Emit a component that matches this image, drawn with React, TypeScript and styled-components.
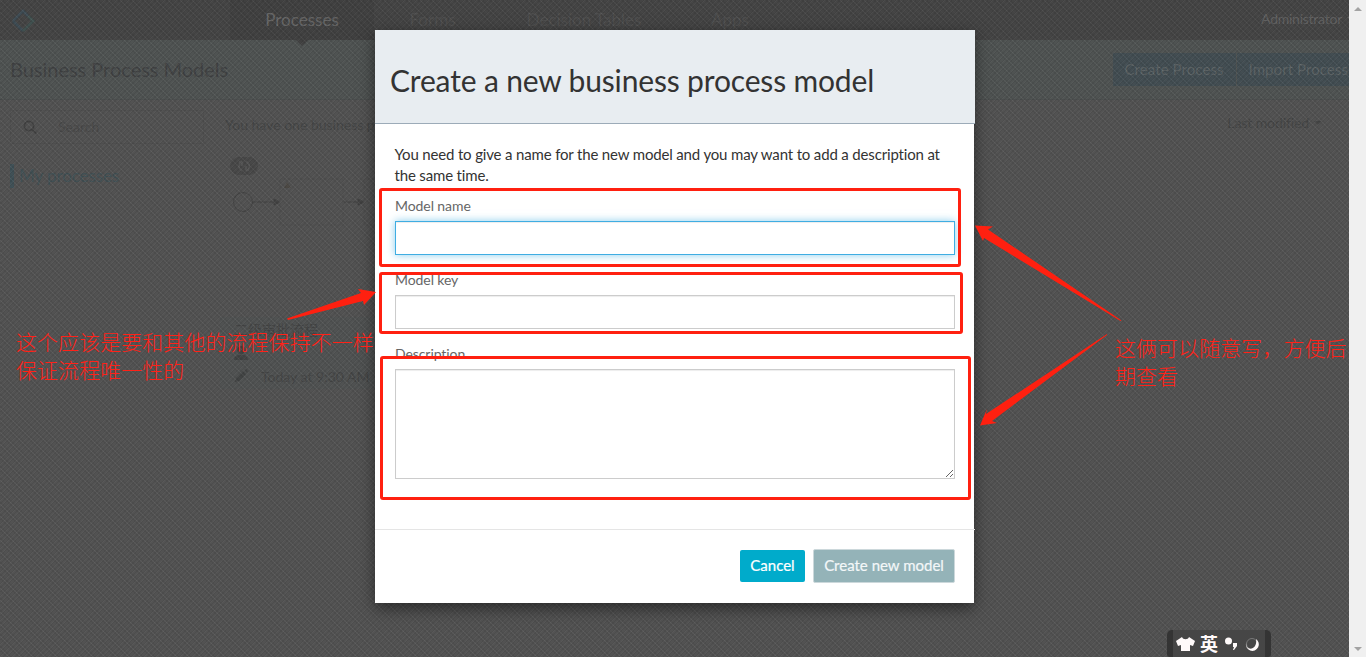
import React from "react";
import styled, { createGlobalStyle } from "styled-components";

const GlobalStyle = createGlobalStyle`
  *, *::before, *::after { box-sizing: border-box; }
  body { margin: 0; overflow: hidden; background: #505050; font-family: Lato, "Noto Sans CJK SC", sans-serif; }
`;

const Screen = styled.div`
  position: relative;
  display: flex;
  width: 1366px;
  height: 657px;
  overflow: hidden;
`;

const Page = styled.div`
  position: relative;
  flex: none;
  width: 1349px;
  overflow: hidden;
  background: #525252;
  color: #444545;
`;

const Texture = styled.div`
  position: absolute;
  inset: 0;
  background:
    linear-gradient(45deg, transparent 40%, rgba(255, 255, 255, 0.04) 50%, transparent 60%) 0 0 / 6px 6px,
    linear-gradient(-45deg, transparent 40%, rgba(255, 255, 255, 0.035) 50%, transparent 60%) 3px 0 / 6px 6px,
    linear-gradient(-45deg, transparent 40%, rgba(0, 0, 0, 0.08) 50%, transparent 60%) 0 0 / 4px 4px,
    linear-gradient(45deg, transparent 40%, rgba(0, 0, 0, 0.07) 50%, transparent 60%) 2px 0 / 4px 4px;
`;

const NavBar = styled.nav`
  display: flex;
  height: 40px;
  background: #444;
  color: #4f4f4f;
  font-size: 17px;
  line-height: 40px;
`;

const Brand = styled.div`
  width: 230px;
  padding: 8px 0 0 10px;
  svg { display: block; }
`;

const NavItem = styled.div<{ $width: number; $active?: boolean }>`
  position: relative;
  width: ${(p) => p.$width}px;
  text-align: center;
  white-space: nowrap;
  background: ${(p) => (p.$active ? "#404040" : "transparent")};
  color: ${(p) => (p.$active ? "#666" : "#4f4f4f")};
  &::after {
    content: "";
    display: ${(p) => (p.$active ? "block" : "none")};
    position: absolute;
    top: 40px;
    left: calc(50% - 6px);
    border: 6px solid transparent;
    border-top-color: #404040;
    border-bottom: 0;
  }
`;

const Account = styled.div`
  display: flex;
  align-items: center;
  gap: 5px;
  height: 38px;
  margin-left: auto;
  margin-right: -6px;
  font-size: 14px;
  letter-spacing: -0.25px;
  color: #606060;
`;

const Caret = styled.span`
  border: 4px solid transparent;
  border-top-color: currentColor;
  border-bottom: 0;
`;

const SubHeader = styled.header`
  display: flex;
  align-items: center;
  justify-content: space-between;
  height: 60px;
  padding-left: 10px;
  border-bottom: 1px solid #4a4d4d;
  background: #4f5352;
`;

const PageTitle = styled.h2`
  margin: 0;
  padding-bottom: 2px;
  font-size: 20px;
  font-weight: 400;
  letter-spacing: -0.02px;
  color: #3f4142;
`;

const Actions = styled.div`
  display: flex;
  gap: 1px;
  margin-right: -11px;
`;

const ActionButton = styled.div`
  height: 33px;
  padding: 0 12px;
  background: #424d52;
  color: #5b6264;
  font-size: 15px;
  letter-spacing: 0.07px;
  line-height: 33px;
  white-space: nowrap;
`;

const Content = styled.div`
  display: flex;
`;

const Sidebar = styled.aside`
  width: 215px;
  padding: 10px 0 0 10px;
`;

const SearchBox = styled.div`
  display: flex;
  align-items: center;
  width: 194px;
  height: 34px;
  border: 1px solid #4e4e4e;
  font-size: 14px;
  line-height: 16px;
  svg { margin: 0 15px 0 12px; }
  span { padding: 0 0 1px 6px; color: #484848; }
`;

const Filter = styled.div`
  margin-top: 20px;
  padding-left: 5px;
  border-left: 4px solid #3f5056;
  font-size: 17px;
  letter-spacing: -0.1px;
  line-height: 24px;
  color: #405055;
`;

const Models = styled.section`
  flex: 1;
  padding: 14px 27px 0 10px;
`;

const Summary = styled.div`
  display: flex;
  justify-content: space-between;
  height: 20px;
  font-size: 14px;
  line-height: 18px;
`;

const ModelCount = styled.div`
  padding-top: 2px;
`;

const SortBy = styled.div`
  display: flex;
  align-items: center;
  gap: 5px;
  height: 18px;
  letter-spacing: -0.1px;
`;

const ModelCard = styled.div`
  width: 210px;
  height: 250px;
  margin-top: 22px;
  padding-left: 5px;
  svg { display: block; }
`;

const ModelInfo = styled.div`
  display: grid;
  gap: 7px;
  margin: 44px -10px 0;
  padding: 4px 14px;
  background: #505252;
  font-size: 14px;
  line-height: 17px;
`;

const InfoRow = styled.div`
  display: flex;
  gap: 13px;
`;

const Scrollbar = styled.div`
  display: flex;
  flex-direction: column;
  align-items: center;
  justify-content: space-between;
  width: 17px;
  padding: 7px 0 6px;
  background: #f0f0f0;
`;

const ScrollArrow = styled.i<{ $up?: boolean }>`
  border: 4px solid transparent;
  ${(p) => (p.$up ? "border-bottom-color: #a3a3a3; border-top: 0;" : "border-top-color: #a3a3a3; border-bottom: 0;")}
`;

const Dialog = styled.div`
  position: absolute;
  top: 30px;
  left: 375px;
  display: flex;
  flex-direction: column;
  width: 599px;
  height: 573px;
  background: #fff;
  box-shadow: 0 5px 15px rgba(0, 0, 0, 0.5);
`;

const DialogHeader = styled.div`
  height: 94px;
  margin-right: -1px;
  padding: 30px 15px 0;
  border-bottom: 1px solid #9cabb8;
  background: #e8edf1;
`;

const DialogTitle = styled.h1`
  margin: 0;
  font-size: 30px;
  font-weight: 400;
  line-height: 40px;
  letter-spacing: -0.16px;
  color: #333;
`;

const DialogBody = styled.div`
  flex: 1;
  padding: 20px 19px 0 20px;
`;

const Intro = styled.p`
  margin: 0 -10px 10px -0.5px;
  font-size: 15px;
  line-height: 21px;
  letter-spacing: -0.16px;
  color: #333;
`;

const Field = styled.label`
  display: block;
  margin-bottom: 15px;
  font-size: 14px;
  line-height: 20px;
  letter-spacing: -0.08px;
  color: #666;
`;

const Input = styled.input<{ $focused?: boolean }>`
  display: block;
  width: 560px;
  height: 34px;
  margin-top: 5px;
  border: 1px solid ${(p) => (p.$focused ? "#3fade2" : "#ccc")};
  outline: none;
  box-shadow: inset 0 1px 1px rgba(0, 0, 0, 0.075)${(p) => (p.$focused ? ", 0 0 8px rgba(63, 173, 226, 0.6)" : "")};
`;

const TextArea = styled.textarea`
  display: block;
  width: 560px;
  height: 110px;
  margin-top: 5px;
  border: 1px solid #ccc;
  outline: none;
  box-shadow: inset 0 1px 1px rgba(0, 0, 0, 0.075);
`;

const DialogFooter = styled.div`
  display: flex;
  align-items: flex-start;
  justify-content: flex-end;
  gap: 8px;
  height: 74px;
  margin-right: -1px;
  padding: 19px 20px 0;
  border-top: 1px solid #e5e5e5;
`;

const Button = styled.button<{ $muted?: boolean }>`
  width: ${(p) => (p.$muted ? 142 : 65)}px;
  height: ${(p) => (p.$muted ? 34 : 32)}px;
  margin-top: ${(p) => (p.$muted ? 0 : 1)}px;
  padding: 0 0 2px;
  border: ${(p) => (p.$muted ? "1px solid #ccd8db" : "0")};
  border-radius: 2px;
  background: ${(p) => (p.$muted ? "#94b3b8" : "#00abcb")};
  color: ${(p) => (p.$muted ? "#f3f7f8" : "#fff")};
  font: 400 15px Lato, sans-serif;
  -webkit-text-stroke: 0.2px currentColor;
`;

const Highlight = styled.div<{ $x: number; $y: number; $w: number; $h: number }>`
  position: absolute;
  left: ${(p) => p.$x}px;
  top: ${(p) => p.$y}px;
  width: ${(p) => p.$w}px;
  height: ${(p) => p.$h}px;
  border: 3px solid #ff2010;
  border-radius: 3px;
`;

const Arrows = styled.svg`
  position: absolute;
  inset: 0;
  fill: #ff2010;
`;

const Note = styled.div<{ $x: number; $y: number }>`
  position: absolute;
  left: ${(p) => p.$x}px;
  top: ${(p) => p.$y}px;
  color: #ff2218;
  font: 300 21px/28px "Noto Sans CJK SC", sans-serif;
  letter-spacing: 0.05px;
  white-space: nowrap;
`;

const InputMethodBar = styled.div`
  position: absolute;
  left: 1167px;
  top: 630px;
  display: flex;
  align-items: center;
  width: 104px;
  height: 27px;
  padding-left: 3px;
  border: solid #343434;
  border-width: 0 6px;
  border-radius: 5px 5px 3px 3px;
  background: #464646;
  color: #fffafa;
  font: 700 18px/27px "Noto Sans CJK SC", sans-serif;
  svg { flex: none; }
  span { margin: 0 5px; }
`;

export default function App() {
  return (
    <>
      <GlobalStyle />
      <Screen>
        <Page>
          <NavBar>
            <Brand>
              <svg width="26" height="26" fill="none" strokeWidth="3">
                <path d="M3 13 13 3l5 5M3 13l10 10" stroke="#3d4b53" />
                <path d="m18 8 5 5-10 10" stroke="#40504f" />
              </svg>
            </Brand>
            <NavItem $width={144} $active>Processes</NavItem>
            <NavItem $width={117}>Forms</NavItem>
            <NavItem $width={186}>Decision Tables</NavItem>
            <NavItem $width={106}>Apps</NavItem>
            <Account>Administrator <Caret /></Account>
          </NavBar>
          <SubHeader>
            <PageTitle>Business Process Models</PageTitle>
            <Actions>
              <ActionButton>Create Process</ActionButton>
              <ActionButton>Import Process</ActionButton>
            </Actions>
          </SubHeader>
          <Content>
            <Sidebar>
              <SearchBox>
                <svg width="14" height="14" fill="none" stroke="#404040" strokeWidth="1.7">
                  <circle cx="6" cy="6" r="4.6" /><path d="m9.5 9.5 4 4" />
                </svg>
                <span>Search</span>
              </SearchBox>
              <Filter>My processes</Filter>
            </Sidebar>
            <Models>
              <Summary>
                <ModelCount>You have one business process model</ModelCount>
                <SortBy>Last modified <Caret /></SortBy>
              </Summary>
              <ModelCard>
                <svg width="190" height="117" fill="none" stroke="#434343">
                  <rect x="0" y="1" width="28" height="18" rx="9" fill="#484848" stroke="none" />
                  <path d="M12 5c-4 3-4 8 0 10m4-10c5 3 4 8 0 10M9 6h3v4m7 4h-3v-4" stroke="#555" strokeWidth="1.5" />
                  <circle cx="13" cy="46" r="9.5" />
                  <path d="M23 46h22M114 46h15" />
                  <path d="m44 43 6 3-6 3zm84 0 6 3-6 3z" fill="#434343" />
                  <path d="M50 23h63v46H50zM134 23h56v46h-56z" stroke="#4e4e4e" />
                  <path d="m54 32 3-6 4 6z" fill="#4b4843" stroke="none" />
                </svg>
                <ModelInfo>
                  <InfoRow>二级审批流程</InfoRow>
                  <InfoRow>
                    <svg width="14" height="16" fill="#414343"><circle cx="7" cy="5" r="4" /><path d="M0 15c0-7 14-7 14 0z" /></svg>
                  </InfoRow>
                  <InfoRow>
                    <svg width="14" height="16" fill="#414343"><path d="m1 14 1-4 7-7 3 3-7 7zm9-12 2-1 2 2-1 2z" /></svg>
                    Today at 9:30 AM
                  </InfoRow>
                </ModelInfo>
              </ModelCard>
            </Models>
          </Content>
          <Texture />
        </Page>
        <Scrollbar>
          <ScrollArrow $up />
          <ScrollArrow />
        </Scrollbar>

        <Dialog>
          <DialogHeader>
            <DialogTitle>Create a new business process model</DialogTitle>
          </DialogHeader>
          <DialogBody>
            <Intro>
              You need to give a name for the new model and you may want to add a description at
              <br />
              the same time.
            </Intro>
            <Field>Model name<Input $focused /></Field>
            <Field>Model key<Input /></Field>
            <Field>Description<TextArea /></Field>
          </DialogBody>
          <DialogFooter>
            <Button>Cancel</Button>
            <Button $muted>Create new model</Button>
          </DialogFooter>
        </Dialog>

        <Highlight $x={379} $y={188} $w={582} $h={79} />
        <Highlight $x={379} $y={272} $w={584} $h={62} />
        <Highlight $x={380} $y={356} $w={591} $h={144} />
        <Arrows width="1366" height="657">
          <path d="M287 318.500 361 293l-3-4 18 3-12 13-1-4-75 19z" />
          <path d="m975 225.500 18 1-5 3 133.500 91-1 .5L984 238l-1 3z" />
          <path d="m1107 334-121 80 1-5-7 16.500 17-2.500-5-2 115-86z" />
        </Arrows>
        <Note $x={16} $y={327}>这个应该是要和其他的流程保持不一样<br />保证流程唯一性的</Note>
        <Note $x={1115} $y={333}>这俩可以随意写，方便后<br />期查看</Note>

        <InputMethodBar>
          <svg width="19" height="16" fill="#fffafa"><path d="m6 1-6 4 2 5 3-1v6h9V9l3 1 2-5-6-4c-1 3-6 3-7 0z" /></svg>
          <span>英</span>
          <svg width="40" height="20" fill="#fffafa">
            <circle cx="5.500" cy="7" r="3.500" />
            <path d="M10 9h4v3l-3 4h-1l1-3h-1z" />
            <circle cx="29" cy="10" r="5.500" fill="none" stroke="#777" />
            <path d="M33 5a6.500 6.500 0 1 1-10 4c0 9 12 7 10-4z" />
          </svg>
        </InputMethodBar>
      </Screen>
    </>
  );
}
